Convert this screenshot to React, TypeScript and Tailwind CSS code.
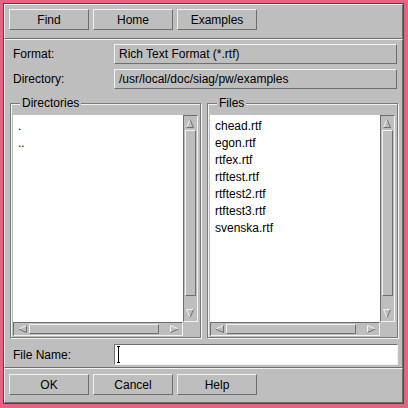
import React from 'react';

const raised = 'border border-t-[#f2f2f2] border-l-[#f2f2f2] border-r-[#6e6e6e] border-b-[#6e6e6e]';
const sunken = 'border border-t-[#6e6e6e] border-l-[#6e6e6e] border-r-[#f2f2f2] border-b-[#f2f2f2]';

type Dir = 'up' | 'down' | 'left' | 'right';

// beveled triangle like the Xaw3d scrollbar arrows
const Arrow = ({ dir }: { dir: Dir }) => {
  const light = '#f2f2f2';
  const dark = '#6e6e6e';
  const lines: Record<Dir, [string, string][]> = {
    up: [['M1.5 9.5 L5 1.5', light], ['M5 1.5 L8.5 9.5', dark], ['M1.5 9.5 L8.5 9.5', dark]],
    down: [['M1.5 1.5 L8.5 1.5', light], ['M1.5 1.5 L5 9.5', light], ['M8.5 1.5 L5 9.5', dark]],
    left: [['M9.5 1.5 L1.5 5', light], ['M1.5 5 L9.5 8.5', dark], ['M9.5 1.5 L9.5 8.5', dark]],
    right: [['M1.5 1.5 L1.5 8.5', light], ['M1.5 1.5 L9.5 5', light], ['M1.5 8.5 L9.5 5', dark]],
  };
  return (
    <svg width="11" height="11" viewBox="0 0 11 11" fill="none">
      {lines[dir].map(([d, c], i) => (
        <path key={i} d={d} stroke={c} strokeWidth="1" />
      ))}
    </svg>
  );
};

const Btn = ({ label }: { label: string }) => (
  <div className={`${raised} w-[80px] h-[21px] flex items-center justify-center`}>{label}</div>
);

const VScroll = () => (
  <div className={`${sunken} w-[15px] flex flex-col p-[1px]`}>
    <div className="h-[13px] flex items-center justify-center"><Arrow dir="up" /></div>
    <div className={`${raised} flex-1`} />
    <div className="h-[11px]" />
    <div className="h-[13px] flex items-center justify-center"><Arrow dir="down" /></div>
  </div>
);

const HScroll = () => (
  <div className={`${sunken} flex-1 h-[14px] flex p-[1px]`}>
    <div className="w-[14px] flex items-center justify-center"><Arrow dir="left" /></div>
    <div className={`${raised} flex-1`} />
    <div className="w-[8px]" />
    <div className="w-[14px] flex items-center justify-center"><Arrow dir="right" /></div>
  </div>
);

const Group = ({ title, items }: { title: string; items: string[] }) => (
  <fieldset className="flex-1 flex flex-col border border-[#7a7a7a] shadow-[inset_1px_1px_0_#f2f2f2,1px_1px_0_#f2f2f2] px-[2px] pt-[5px] pb-[1px] min-w-0">
    <legend className="ml-[7px] px-[2px] leading-[14px] bg-[#bebebe]">{title}</legend>
    <div className="flex-1 flex flex-col">
      <div className="flex-1 flex">
        <div className="flex-1 bg-white pl-[5px] pt-[3px] leading-[17px]">
          {items.map((it) => (
            <div key={it}>{it}</div>
          ))}
        </div>
        <VScroll />
      </div>
      <div className="flex">
        <HScroll />
        <div className="w-[15px]" />
      </div>
    </div>
  </fieldset>
);

const Field = ({ label, value }: { label: string; value: string }) => (
  <div className="flex items-center h-[20px]">
    <span className="w-[104px] pl-[3px]">{label}</span>
    <div className={`${raised} flex-1 h-full mr-[1px] flex items-center pl-[4px]`}>{value}</div>
  </div>
);

export default function App() {
  return (
    <div className="w-[408px] h-[408px] bg-[#e4657f] pt-[3px] pl-[3px] pr-[4px] pb-[4px] font-['Liberation_Sans',Arial,sans-serif] text-[12px] text-black">
      <div className="h-full flex flex-col border border-[#4a4a4a] bg-[#bebebe]">
        <div className={`${raised} h-[35px] flex gap-[4px] pl-[4px] pt-[4px]`}>
          <Btn label="Find" />
          <Btn label="Home" />
          <Btn label="Examples" />
        </div>

        <div className={`${raised} flex-1 flex flex-col pl-[5px] pr-[4px] pt-[4px] pb-[2px]`}>
          <Field label="Format:" value="Rich Text Format (*.rtf)" />
          <div className="h-[5px]" />
          <Field label="Directory:" value="/usr/local/doc/siag/pw/examples" />
          <div className="flex-1 flex gap-[6px] mt-[7px]">
            <Group title="Directories" items={['.', '..']} />
            <Group
              title="Files"
              items={['chead.rtf', 'egon.rtf', 'rtfex.rtf', 'rtftest.rtf', 'rtftest2.rtf', 'rtftest3.rtf', 'svenska.rtf']}
            />
          </div>
          <div className="flex items-center h-[21px] mt-[6px]">
            <span className="w-[104px] pl-[3px]">File Name:</span>
            <div className={`${sunken} flex-1 h-full bg-white flex items-center pl-[2px]`}>
              <svg width="5" height="17" viewBox="0 0 5 17">
                <path d="M0 0.5 H3 M1.5 0 V17 M0 16.5 H3" stroke="#000" strokeWidth="1" fill="none" />
              </svg>
            </div>
          </div>
        </div>

        <div className={`${raised} h-[35px] flex gap-[4px] pl-[4px] pt-[5px]`}>
          <Btn label="OK" />
          <Btn label="Cancel" />
          <Btn label="Help" />
        </div>
      </div>
    </div>
  );
}
